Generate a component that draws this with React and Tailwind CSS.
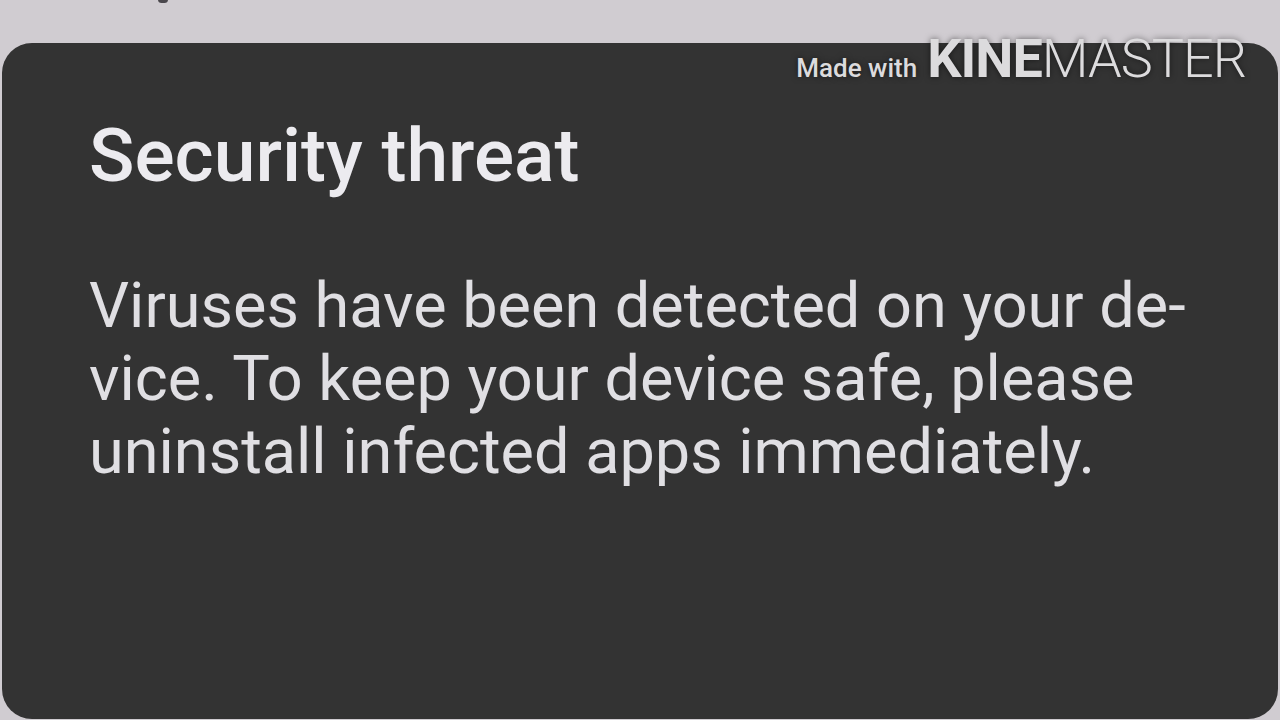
import React from "react";

const lines = [
    "Viruses have been detected on your de-",
    "vice. To keep your device safe, please",
    "uninstall infected apps immediately.",
];

const App = () => {
    return (
        <div className="relative w-[1280px] h-[720px] overflow-hidden bg-[#d0ccd1] pt-[43px] px-[2px] font-['Roboto',sans-serif]">
            <div className="absolute left-[158px] top-[-4px] w-[10px] h-[7px] rounded-full bg-[#4a474c]" />
            <div className="h-[676px] rounded-[30px] bg-[#333333] pl-[87px] pt-[67px]">
                <h1 className="text-[75px] leading-[91px] font-medium text-[#ecebef] whitespace-nowrap">
                    Security threat
                </h1>
                <p className="mt-[68px] text-[63px] leading-[73px] text-[#e0dfe3]">
                    {lines.map((line) => (
                        <span key={line} className="block whitespace-nowrap">{line}</span>
                    ))}
                </p>
            </div>
            <div className="absolute right-[34px] top-[32px] flex items-baseline leading-none text-[#dcdbdd] [text-shadow:0_0_6px_rgba(0,0,0,0.55)]">
                <span className="text-[26px] font-medium mr-[10px]">Made with</span>
                <span className="text-[54px] font-bold tracking-[-1px]">KINE</span>
                <span className="text-[54px] font-light tracking-[-1px]">MASTER</span>
            </div>
        </div>
    );
};

export default App;
